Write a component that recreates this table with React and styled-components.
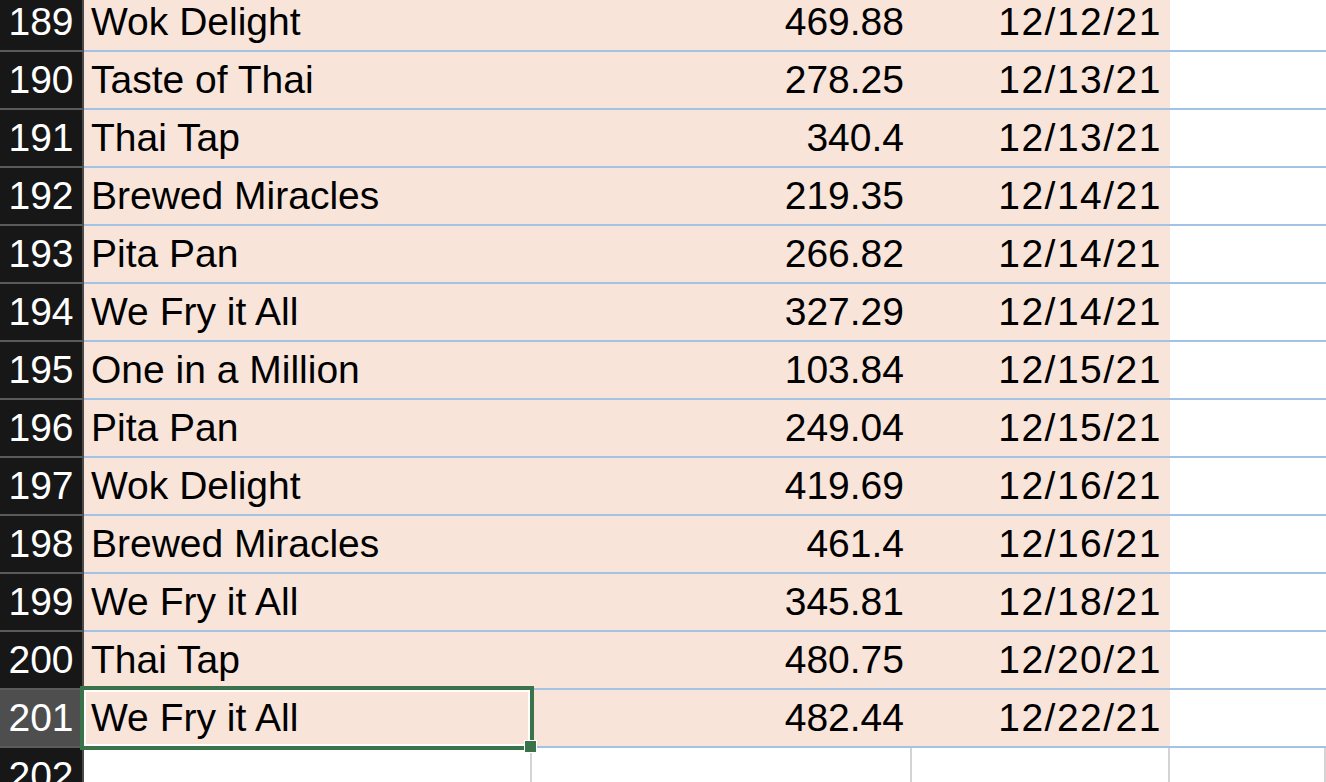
import React from 'react'
import styled, { createGlobalStyle } from 'styled-components'

const rows = [
  { n: 189, name: 'Wok Delight', amount: '469.88', date: '12/12/21' },
  { n: 190, name: 'Taste of Thai', amount: '278.25', date: '12/13/21' },
  { n: 191, name: 'Thai Tap', amount: '340.4', date: '12/13/21' },
  { n: 192, name: 'Brewed Miracles', amount: '219.35', date: '12/14/21' },
  { n: 193, name: 'Pita Pan', amount: '266.82', date: '12/14/21' },
  { n: 194, name: 'We Fry it All', amount: '327.29', date: '12/14/21' },
  { n: 195, name: 'One in a Million', amount: '103.84', date: '12/15/21' },
  { n: 196, name: 'Pita Pan', amount: '249.04', date: '12/15/21' },
  { n: 197, name: 'Wok Delight', amount: '419.69', date: '12/16/21' },
  { n: 198, name: 'Brewed Miracles', amount: '461.4', date: '12/16/21' },
  { n: 199, name: 'We Fry it All', amount: '345.81', date: '12/18/21' },
  { n: 200, name: 'Thai Tap', amount: '480.75', date: '12/20/21' },
  { n: 201, name: 'We Fry it All', amount: '482.44', date: '12/22/21', selected: true },
]

const App = () => {
  return (
    <>
      <Global />
      <Sheet>
        {rows.map((r) => (
          <Row key={r.n}>
            <RowHead $active={r.selected}>{r.n}</RowHead>
            <Cell $filled>
              {r.name}
              {r.selected && (
                <Selection>
                  <FillHandle />
                </Selection>
              )}
            </Cell>
            <Cell $filled $right>{r.amount}</Cell>
            <Cell $filled $right $date>{r.date}</Cell>
            <Cell $lined />
          </Row>
        ))}
        <Row>
          <RowHead>202</RowHead>
          <Cell />
          <Cell />
          <Cell />
          <Cell />
        </Row>
      </Sheet>
    </>
  )
}

//Styled Component
const Global = createGlobalStyle`
  html, body {
    margin: 0;
    padding: 0;
    background: #fff;
    overflow: hidden;
  }
`

const Sheet = styled.div`
  margin-top: -6px;
  font-family: 'Liberation Sans', Arial, sans-serif;
  font-size: 39px;
  color: #000;
`

const Row = styled.div`
  display: grid;
  grid-template-columns: 84px 448px 380px 258px 1fr;
  height: 58px;
`

const RowHead = styled.div`
  box-sizing: border-box;
  background: ${(p) => (p.$active ? '#4e4e4e' : '#171717')};
  color: #fff;
  border-right: 2px solid #4a4a4a;
  border-bottom: 2px solid #5a5a5a;
  text-align: center;
  line-height: 56px;
`

const Cell = styled.div`
  position: relative;
  box-sizing: border-box;
  background: ${(p) => (p.$filled ? '#f8e4d9' : '#fff')};
  border-bottom: 2px solid
    ${(p) => (p.$filled || p.$lined ? '#a4c2e3' : 'transparent')};
  border-right: ${(p) =>
    p.$filled || p.$lined ? 'none' : '2px solid #d4d4d4'};
  padding: ${(p) => (p.$right ? '0 8px 0 7px' : '0 6px 0 7px')};
  line-height: 56px;
  white-space: nowrap;
  letter-spacing: ${(p) => (p.$date ? '1.5px' : '0')};
  text-align: ${(p) => (p.$right ? 'right' : 'left')};
`

const Selection = styled.div`
  position: absolute;
  z-index: 5;
  left: -4px;
  top: -4px;
  right: -2px;
  bottom: -4px;
  border: 4px solid #3a7249;
  box-shadow: inset 0 0 0 2px #fff;
  pointer-events: none;
`

const FillHandle = styled.div`
  position: absolute;
  right: -7px;
  bottom: -7px;
  width: 11px;
  height: 11px;
  background: #3a7249;
  border: 1px solid #fff;
`

export default App
